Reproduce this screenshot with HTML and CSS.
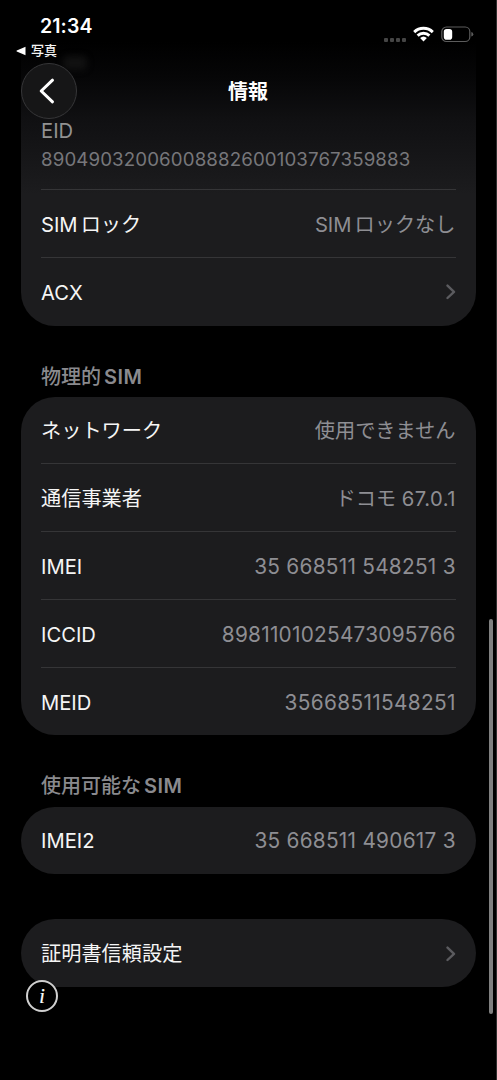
FILE: index.html
```html
<!DOCTYPE html>
<html lang="ja">
<head>
<meta charset="utf-8">
<title>情報</title>
<link rel="stylesheet" href="styles.css">
</head>
<body>
<div class="screen">
  <header class="top">
    <div class="status">
      <div class="clock">21:34</div>
      <div class="indicators">
        <svg class="dots" width="22" height="4" viewBox="0 0 22 4"><g fill="#454545"><rect x="0" y="0" width="4" height="4" rx="1"/><rect x="6" y="0" width="4" height="4" rx="1"/><rect x="12" y="0" width="4" height="4" rx="1"/><rect x="18" y="0" width="4" height="4" rx="1"/></g></svg>
        <svg class="wifi" width="21" height="16" viewBox="0 0 21 16"><g fill="none" stroke="#fff" stroke-width="2.9"><path d="M1.2 6.1A13.3 13.3 0 0 1 19.8 6.1"/><path d="M4.6 9.6A8.5 8.5 0 0 1 16.4 9.6"/></g><path d="M7.1 12.1a5 5 0 0 1 6.8 0L10.5 15.6z" fill="#fff"/></svg>
        <svg class="battery" width="33" height="17" viewBox="0 0 33 17"><rect x=".8" y="1" width="28" height="14.5" rx="4.6" fill="none" stroke="#5c5c5c" stroke-width="1.2"/><rect x="2.8" y="3" width="8.4" height="10.7" rx="2.8" fill="#fff"/><path d="M30.3 6q2 .6 2 2.300t-2 2.300z" fill="#5c5c5c"/></svg>
      </div>
    </div>
    <div class="return"><svg width="10" height="10" viewBox="0 0 10 10"><path d="M9.500 .8v8.400L.8 5.500q-.8-.5 0-1z" fill="#fff"/></svg><span>写真</span></div>
    <div class="nav">
      <div class="ghost"></div>
      <div class="back"><svg width="16" height="26" viewBox="0 0 16 26"><path d="M13.500 2.200L2.200 13l11.300 10.800" fill="none" stroke="#fff" stroke-width="3" stroke-linecap="round" stroke-linejoin="round"/></svg></div>
      <h1 class="title">情報</h1>
    </div>
  </header>
  <main class="list">
    <section class="card first">
      <div class="row stacked"><span class="label eid">EID</span><span class="value number">89049032006008882600103767359883</span></div>
      <div class="row"><span class="label">SIM<span class="after">ロック</span></span><span class="value">SIM<span class="after">ロックなし</span></span></div>
      <div class="row"><span class="label">ACX</span><svg class="chev" width="11" height="17" viewBox="0 0 11 17"><path d="M2.500 1.600L9 7.800 2.500 14"/></svg></div>
    </section>
    <h2 class="heading">物理的<span class="after sim">SIM</span></h2>
    <section class="card">
      <div class="row lead"><span class="label">ネットワーク</span><span class="value">使用できません</span></div>
      <div class="row"><span class="label">通信事業者</span><span class="value">ドコモ <span class="ver">67.0.1</span></span></div>
      <div class="row"><span class="label">IMEI</span><span class="value imei">35 668511 548251 3</span></div>
      <div class="row"><span class="label">ICCID</span><span class="value iccid">8981101025473095766</span></div>
      <div class="row"><span class="label">MEID</span><span class="value meid">35668511548251</span></div>
    </section>
    <h2 class="heading second">使用可能な<span class="after sim">SIM</span></h2>
    <section class="card single">
      <div class="row lead"><span class="label">IMEI2</span><span class="value imei">35 668511 490617 3</span></div>
    </section>
    <section class="card single trust">
      <div class="row"><span class="label">証明書信頼設定</span><svg class="chev" width="11" height="17" viewBox="0 0 11 17"><path d="M2.500 1.600L9 7.800 2.500 14"/></svg></div>
    </section>
  </main>
  <div class="info">i</div>
  <div class="scrollbar"></div>
</div>
</body>
</html>
```
FILE: styles.css
```css
* { box-sizing: border-box; }
body { margin: 0; background: #000; }
.screen {
  position: relative;
  width: 497px;
  height: 1080px;
  overflow: hidden;
  background: #000;
  border-right: 1px solid #303030;
  color: #f5f5f5;
  font-family: Inter, "Noto Sans CJK JP", sans-serif;
  font-size: 20.2px;
}
.top { height: 119px; padding: 14px 0 0 21px; background: linear-gradient(#000 35%, #060607 65%, #101012) 21px 0 / 455px 100% no-repeat; }
.status { display: flex; justify-content: space-between; height: 24px; padding: 0 22px 0 19px; }
.clock { font-size: 19.5px; line-height: 24px; font-weight: 600; color: #fff; letter-spacing: .1px; }
.indicators { display: flex; gap: 7px; padding: 12px 0 0; }
.dots { margin-top: 12px; }
.wifi, .battery { flex: none; }
.return { display: flex; align-items: center; height: 25px; margin-left: -5px; gap: 5px; font-size: 13px; line-height: 16px; font-weight: 500; }
.return span { margin-top: -2px; }
.nav { position: relative; height: 56px; }
.ghost { position: absolute; left: 42px; top: -7px; width: 24px; height: 14px; border-radius: 5px; background: #111; filter: blur(3px); }
.back {
  position: relative;
  z-index: 2;
  display: flex;
  align-items: center;
  justify-content: center;
  width: 56px;
  height: 56px;
  padding-right: 4px;
  border: 1.3px solid #363638;
  border-radius: 50%;
  background: #161617;
}
.title { position: absolute; inset: 1px 21px 0 0; margin: 0; text-align: center; font-size: 20px; line-height: 56px; font-weight: 700; color: #fff; }
.list { padding: 0 20px 0 21px; }
.card { border-radius: 34px; background: #1c1c1e; }
.first { height: 206.500px; border-radius: 0 0 34px 34px; background: linear-gradient(#101012, #1c1c1e 75px); }
.row { display: flex; align-items: center; justify-content: space-between; height: 68px; padding: 2px 20.500px 0 20px; white-space: nowrap; line-height: 28px; }
.row + .row {
  padding-top: 3px;
  background: linear-gradient(#353537, #353537) 20px 0 / 415px 1px no-repeat;
}
.row.lead { height: 66.500px; }
.row.stacked { height: 70px; padding-top: 0; flex-direction: column; align-items: flex-start; justify-content: flex-start; }
.label { color: #f5f5f5; }
.eid { height: 29px; margin-top: -2px; color: #929292; }
.value { color: #8e8e93; }
.number { font-size: 18.700px; letter-spacing: .12px; color: #77777b; }
.ver { letter-spacing: .5px; margin-right: -.5px; }
.imei, .iccid, .meid { font-size: 20.800px; }
.imei { letter-spacing: .26px; margin-right: -.26px; }
.iccid { letter-spacing: .25px; margin-right: -.25px; }
.meid { letter-spacing: .35px; margin-right: -.35px; }
.after { margin-left: 3px; }
.heading { height: 71px; margin: 0; padding: 36px 0 0 20px; font-size: 20px; line-height: 30px; font-weight: 500; color: #8a8a8e; }
.sim { font-weight: 600; letter-spacing: .5px; }
.card + .second { height: 71.500px; }
.single { height: 67.500px; }
.trust { margin-top: 45px; }
.chev { fill: none; stroke: #5b5b5f; stroke-width: 2.400; stroke-linecap: round; stroke-linejoin: round; }
.info {
  position: absolute;
  left: 26px;
  top: 980px;
  width: 32px;
  height: 32px;
  border: 2px solid #d0d0d0;
  border-radius: 50%;
  background: #000;
  color: #fff;
  text-align: center;
  font: italic 20px/28px "Liberation Serif", serif;
  -webkit-text-stroke: .2px #fff;
}
.scrollbar { position: absolute; right: 3px; top: 619px; width: 4px; height: 395px; border-radius: 2px; background: #808080; }
```
